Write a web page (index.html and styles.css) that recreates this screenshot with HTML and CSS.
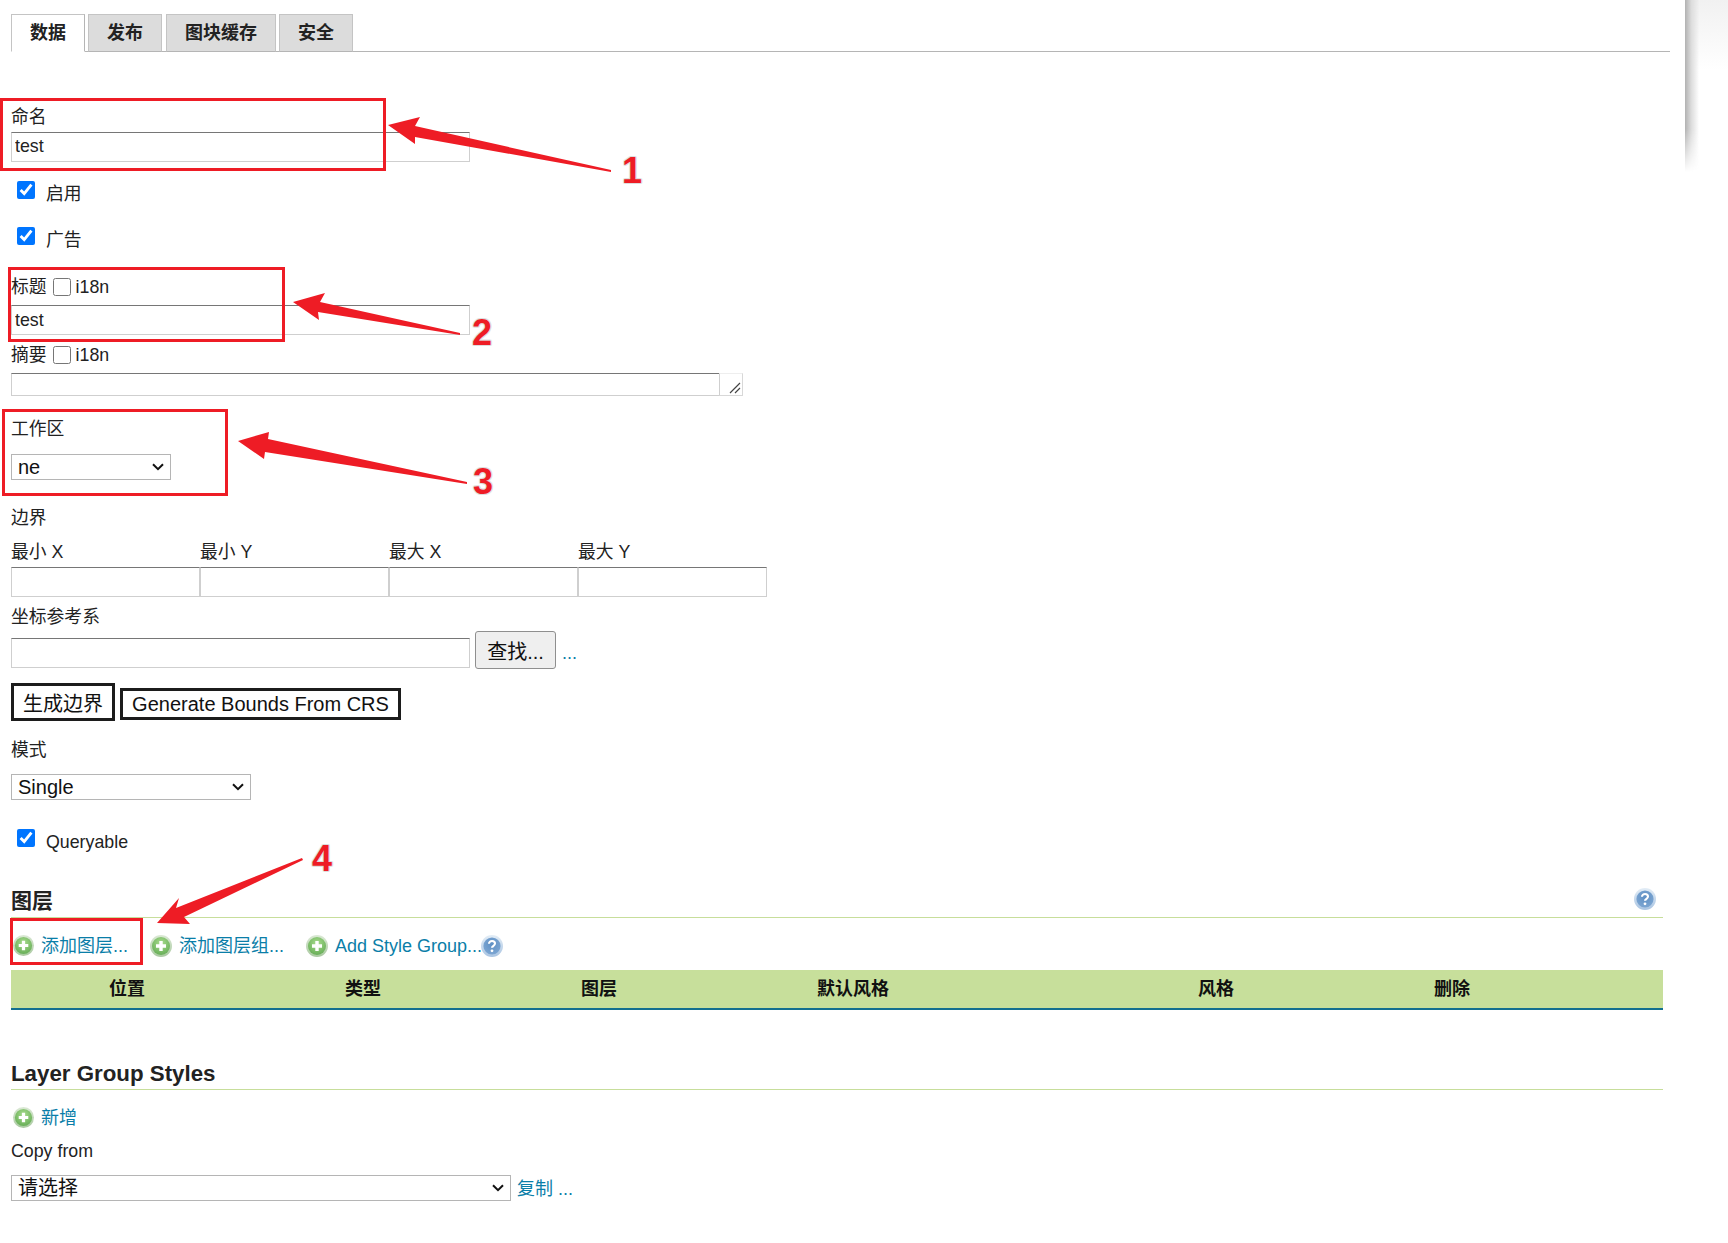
FILE: index.html
```html
<!DOCTYPE html>
<html lang="zh">
<head>
<meta charset="utf-8">
<title>图层组</title>
<link rel="stylesheet" href="styles.css">
</head>
<body>
<svg class="defs" aria-hidden="true">
  <defs>
    <radialGradient id="g-add" cx="50%" cy="35%" r="70%">
      <stop offset="0" stop-color="#a9dc8e"/>
      <stop offset="1" stop-color="#63ab54"/>
    </radialGradient>
    <linearGradient id="g-add-rim" x1="0" y1="0" x2="0" y2="1">
      <stop offset="0" stop-color="#dbe9d5"/>
      <stop offset="1" stop-color="#a9c9a0"/>
    </linearGradient>
    <linearGradient id="g-help-rim" x1="0" y1="0" x2="0" y2="1">
      <stop offset="0" stop-color="#e3edf6"/>
      <stop offset="1" stop-color="#a9c4e2"/>
    </linearGradient>
    <radialGradient id="g-help" cx="50%" cy="40%" r="65%">
      <stop offset="0" stop-color="#5f90c4"/>
      <stop offset="1" stop-color="#7ea7d3"/>
    </radialGradient>
    <symbol id="i-add" viewBox="0 0 22 22">
      <circle cx="11" cy="11" r="11" fill="url(#g-add-rim)"/>
      <circle cx="11" cy="11" r="9" fill="url(#g-add)"/>
      <path d="M11 6v10M6 11h10" stroke="#fff" stroke-width="3.4"/>
    </symbol>
    <symbol id="i-help" viewBox="0 0 22 22">
      <circle cx="11" cy="11" r="11" fill="url(#g-help-rim)"/>
      <circle cx="11" cy="11" r="8.6" fill="url(#g-help)"/>
      <path d="M8 8.8c0-1.9 1.4-2.8 3-2.8s3 .9 3 2.6c0 2.2-3 2.2-3 4.2" fill="none" stroke="#fff" stroke-width="2.1"/>
      <circle cx="11" cy="15.8" r="1.4" fill="#fff"/>
    </symbol>
  </defs>
</svg>

<main class="page">
  <nav class="tabs">
    <a class="tab tab-active">数据</a>
    <a class="tab">发布</a>
    <a class="tab tab-wide">图块缓存</a>
    <a class="tab">安全</a>
  </nav>

  <form class="form">
    <label class="label l-name">命名</label>
    <input class="field f-wide f-name" type="text" value="test">

    <div class="check c-enabled"><input class="cb" type="checkbox" checked><span class="check-text">启用</span></div>
    <div class="check c-ad"><input class="cb" type="checkbox" checked><span class="check-text">广告</span></div>

    <div class="label label-i18n l-title">标题 <input class="cb cb-small" type="checkbox"> <span>i18n</span></div>
    <input class="field f-wide f-title" type="text" value="test">

    <div class="label label-i18n l-abstract">摘要 <input class="cb cb-small" type="checkbox"> <span>i18n</span></div>
    <div class="area">
      <div class="area-main"></div>
      <div class="area-grip">
        <svg width="12" height="12" viewBox="0 0 12 12"><path d="M1 11 11 1M6 11 11 6" stroke="#444" stroke-width="1.2" fill="none"/></svg>
      </div>
    </div>

    <label class="label l-workspace">工作区</label>
    <select class="sel s-workspace"><option>ne</option></select>

    <div class="label l-bounds">边界</div>
    <div class="bounds-labels">
      <span class="label">最小 X</span><span class="label">最小 Y</span><span class="label">最大 X</span><span class="label">最大 Y</span>
    </div>
    <div class="bounds-inputs">
      <input class="field" type="text"><input class="field" type="text"><input class="field" type="text"><input class="field" type="text">
    </div>

    <label class="label l-crs">坐标参考系</label>
    <div class="crs-row">
      <input class="field f-wide" type="text">
      <button class="btn-find" type="button">查找...</button>
      <a class="link link-dots">...</a>
    </div>

    <div class="gen-row">
      <button class="btn-gen btn-gen-a" type="button">生成边界</button>
      <button class="btn-gen btn-gen-b" type="button">Generate Bounds From CRS</button>
    </div>

    <label class="label l-mode">模式</label>
    <select class="sel s-mode"><option>Single</option></select>

    <div class="check c-query"><input class="cb" type="checkbox" checked><span class="check-text">Queryable</span></div>

    <h3 class="section s-layers">图层
      <svg class="ico-help-top" width="22" height="22"><use href="#i-help"/></svg>
    </h3>
    <div class="add-row">
      <a class="link add add-1"><svg class="ico" width="21" height="21"><use href="#i-add"/></svg>添加图层...</a>
      <a class="link add add-2"><svg class="ico" width="22" height="22"><use href="#i-add"/></svg>添加图层组...</a>
      <a class="link add add-3"><svg class="ico" width="22" height="22"><use href="#i-add"/></svg>Add Style Group...</a>
      <svg class="ico-help" width="22" height="22"><use href="#i-help"/></svg>
    </div>

    <div class="thead">
      <span>位置</span><span>类型</span><span>图层</span><span>默认风格</span><span>风格</span><span>删除</span>
    </div>

    <h3 class="section s-styles">Layer Group Styles</h3>
    <div class="add-row add-row-new">
      <a class="link add add-1"><svg class="ico" width="21" height="21"><use href="#i-add"/></svg>新增</a>
    </div>
    <label class="label l-copy">Copy from</label>
    <div class="copy-row">
      <select class="sel s-copy"><option>请选择</option></select>
      <a class="link">复制 ...</a>
    </div>
  </form>
</main>

<div class="edge-tint"></div>
<div class="edge-shadow"></div>

<div class="mark mark-1"></div>
<div class="mark mark-2"></div>
<div class="mark mark-3"></div>
<div class="mark mark-4"></div>

<svg class="arrows" width="1728" height="1243" viewBox="0 0 1728 1243" aria-hidden="true">
  <polygon points="388,125 420,117 415,126 611,170 611,172 415,137 415,144"/>
  <polygon points="293,302 325,293 320,302 460,333 460,335 318,312 319,320"/>
  <polygon points="238,441 269,432 268,439 467,482 467,484 265,452 264,459"/>
  <polygon points="157,923 179,898 176,908 302,858 303,860 184,917 190,924"/>
</svg>

<span class="num num-1">1</span>
<span class="num num-2">2</span>
<span class="num num-3">3</span>
<span class="num num-4">4</span>
</body>
</html>
```

FILE: styles.css
```css
* { box-sizing: border-box; }

html, body { margin: 0; padding: 0; background: #fff; }

body {
  position: relative;
  height: 1243px;
  overflow: hidden;
  font-family: "Liberation Sans", "Noto Sans CJK SC", sans-serif;
  font-size: 17.8px;
  line-height: 22px;
  color: #222;
}

.defs { position: absolute; width: 0; height: 0; }

.page { padding: 14px 0 0 11px; width: 1670px; }

/* Tabs */
.tabs { display: flex; height: 38px; border-bottom: 1px solid #b5b5b5; }
.tab {
  display: block;
  width: 74px;
  height: 38px;
  margin-right: 3px;
  border: 1px solid #c4c4c4;
  border-bottom: 1px solid #b5b5b5;
  background: #dcdcdc;
  font-size: 18px;
  font-weight: bold;
  line-height: 36px;
  text-align: center;
  color: #222;
}
.tab-active { background: #fff; border-bottom-color: #fff; border-right-color: #b5b5b5; }
.tab-wide { width: 110px; margin-left: 1px; }

/* Form */
.form { width: 1652px; }
.label { display: block; height: 22px; }

.field {
  display: block;
  height: 30px;
  margin: 0;
  padding: 0 3px 2px;
  border: 1px solid #cfcfcf;
  border-top-color: #767676;
  border-radius: 0;
  outline: 0;
  background: #fff;
  font: inherit;
  color: #222;
}
.f-wide { width: 459px; }
.l-name { margin-top: 54px; }
.f-name { margin-top: 4px; }

.check { display: flex; height: 23px; padding-left: 6px; }
.check-text { margin: 2px 0 0 11px; }
.cb { width: 18px; height: 18px; margin: 0; flex: none; }
.c-enabled { margin-top: 19px; }
.c-ad { margin-top: 23px; }
.c-query { margin-top: 29px; }

.label-i18n { display: flex; align-items: center; }
.cb-small { margin: 0 5px 0 6px; }
.l-title { margin-top: 26px; }
.f-title { margin-top: 7px; padding-bottom: 0; }
.l-abstract { margin-top: 9px; }

.area { display: flex; width: 732px; height: 23px; margin-top: 7px; }
.area-main {
  width: 708px;
  border: 1px solid #cfcfcf;
  border-top-color: #767676;
  border-right: 0;
}
.area-grip {
  display: flex;
  align-items: flex-end;
  justify-content: flex-end;
  flex: 1;
  border: 1px solid #d8d8d8;
  border-left-color: #cfcfcf;
  border-top-color: #eee;
  padding: 0 1px 1px 0;
}

.sel {
  display: block;
  height: 26px;
  margin: 0;
  padding: 0 24px 0 6px;
  border: 1px solid #b5b5b5;
  border-radius: 0;
  background: #fff url("data:image/svg+xml,%3Csvg xmlns='http://www.w3.org/2000/svg' width='12' height='8'%3E%3Cpath d='M1 1.2 6 6.2 11 1.2' fill='none' stroke='%23111' stroke-width='2'/%3E%3C/svg%3E") no-repeat right 6px center;
  font: 20px "Liberation Sans", "Noto Sans CJK SC", sans-serif;
  color: #111;
  -webkit-appearance: none;
  appearance: none;
}
.l-workspace { margin-top: 22px; }
.s-workspace { width: 160px; margin-top: 14px; }

.l-bounds { margin-top: 27px; }
.bounds-labels, .bounds-inputs { display: grid; grid-template-columns: repeat(4, 189px); }
.bounds-labels { margin-top: 12px; }
.bounds-inputs { margin-top: 4px; }
.bounds-inputs .field { width: 189px; }

.l-crs { margin-top: 9px; }
.crs-row { display: flex; align-items: flex-end; height: 38px; margin-top: 3px; }
.crs-row .field { margin-bottom: 1px; }
.btn-find {
  width: 81px;
  height: 38px;
  margin: 0 0 0 5px;
  padding: 0;
  border: 1px solid #8f8f8f;
  border-radius: 3px;
  background: #efefef;
  font: 20px "Liberation Sans", "Noto Sans CJK SC", sans-serif;
  color: #111;
}
.link { color: #0a7ea8; font-size: 18px; }
.link-dots { margin: 0 0 5px 6px; }

.gen-row { display: flex; align-items: flex-end; height: 38px; margin-top: 14px; }
.btn-gen {
  height: 38px;
  margin: 0;
  padding: 0;
  border: 3px solid #1c1c1c;
  background: #fff;
  font: 20px "Liberation Sans", "Noto Sans CJK SC", sans-serif;
  color: #111;
}
.btn-gen-a { width: 104px; }
.btn-gen-b { width: 281px; height: 32px; margin: 0 0 1px 5px; }

.l-mode { margin-top: 18px; }
.s-mode { width: 240px; margin-top: 13px; }

.section {
  display: flex;
  justify-content: space-between;
  margin: 0;
  padding: 0 7px 4px 0;
  border-bottom: 1px solid #c7de9b;
  font-size: 21px;
  font-weight: bold;
  line-height: 24px;
}
.s-layers { margin-top: 37px; }
.ico-help-top { margin-top: -1px; }
.s-styles { margin-top: 52px; padding-bottom: 3px; font-size: 22.3px; }

.add-row { display: flex; align-items: center; height: 22px; margin-top: 17px; }
.add { display: flex; align-items: center; }
.ico { margin: -1px 7px 0 0; flex: none; }
.add-1 { margin-left: 2px; }
.add-2 { margin-left: 22px; }
.add-3 { margin-left: 22px; }
.ico-help { margin-left: -1px; }
.add-row-new { margin-top: 17px; }

.thead {
  display: grid;
  grid-template-columns: 236px 236px 236px 381px 236px 1fr;
  height: 40px;
  margin-top: 13px;
  padding-left: 98px;
  border-bottom: 2px solid #126f8f;
  background: #c7df9b;
  font-size: 18px;
  font-weight: bold;
  line-height: 39px;
  color: #111;
}

.l-copy { margin-top: 11px; }
.copy-row { display: flex; align-items: center; height: 26px; margin-top: 13px; }
.s-copy { width: 500px; height: 26px; }
.copy-row .link { margin: 2px 0 0 6px; }

/* Browser-frame shading at the top right */
.edge-tint {
  position: absolute;
  top: 0;
  left: 1692px;
  width: 36px;
  height: 70px;
  background: linear-gradient(to bottom, #f1f1f1, #fff);
}
.edge-shadow {
  position: absolute;
  top: 0;
  left: 1685px;
  width: 14px;
  height: 172px;
  background: linear-gradient(to right, #b2b2b2, #dcdcdc 45%, rgba(255, 255, 255, 0));
  -webkit-mask-image: linear-gradient(to bottom, #000 75%, transparent);
  mask-image: linear-gradient(to bottom, #000 75%, transparent);
}

/* Annotations drawn over the screenshot */
.mark { position: absolute; border: 3px solid #ee1c25; }
.mark-1 { left: 0; top: 98px; width: 386px; height: 73px; }
.mark-2 { left: 8px; top: 267px; width: 277px; height: 75px; }
.mark-3 { left: 2px; top: 409px; width: 226px; height: 87px; }
.mark-4 { left: 10px; top: 918px; width: 133px; height: 47px; }

.arrows { position: absolute; top: 0; left: 0; pointer-events: none; }
.arrows polygon { fill: #ee1c25; }

.num {
  position: absolute;
  font-size: 36px;
  font-weight: bold;
  line-height: 36px;
  color: #ee1c25;
  text-shadow: 1px 0 #ddd, -1px 0 #ddd, 0 1px #ddd, 0 -1px #ddd, 1px 1px #eee, -1px -1px #eee, 1px -1px #eee, -1px 1px #eee;
}
.num-1 { left: 622px; top: 153px; }
.num-2 { left: 472px; top: 315px; }
.num-3 { left: 473px; top: 464px; }
.num-4 { left: 312px; top: 841px; }
```
